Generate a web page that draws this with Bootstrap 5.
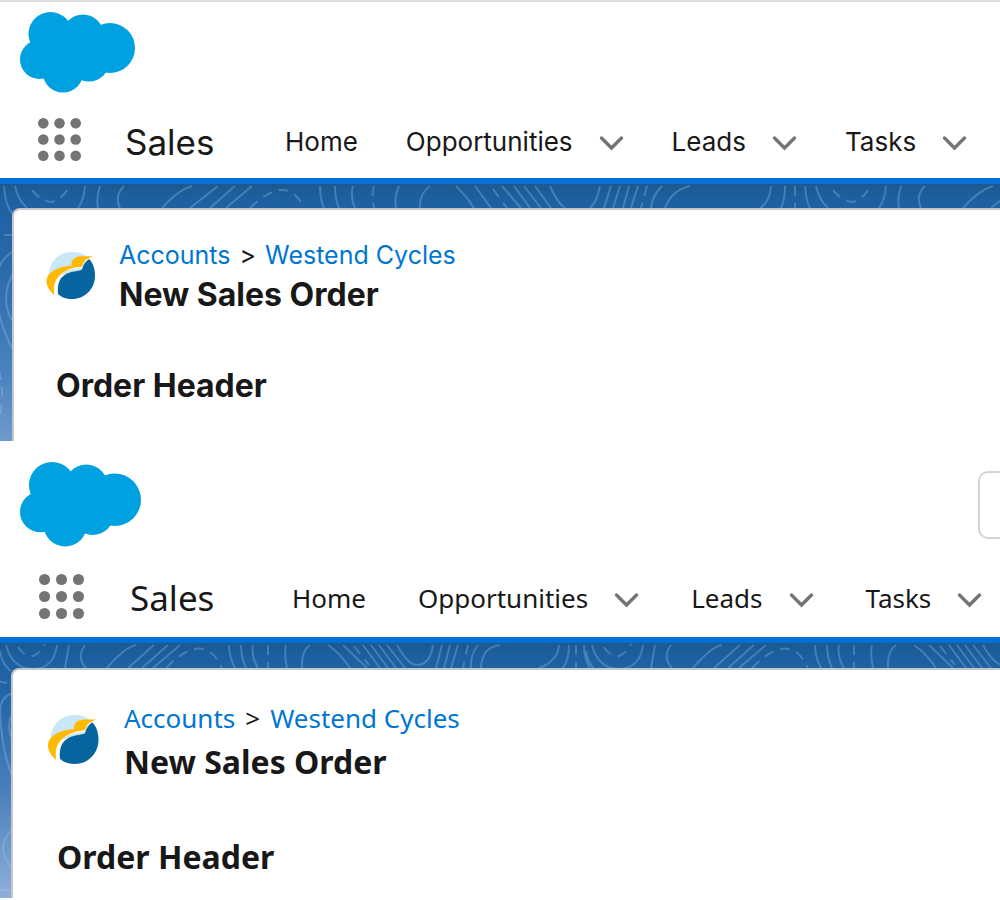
<!DOCTYPE html>
<html lang="en">
<head>
<meta charset="utf-8">
<meta name="viewport" content="width=device-width, initial-scale=1">
<title>New Sales Order</title>
<link href="https://cdn.jsdelivr.net/npm/bootstrap@5.3.0/dist/css/bootstrap.min.css" rel="stylesheet">
<style>
  body { background: #fff; color: #181818; overflow-x: hidden; }
  .pane-mac { font-family: Inter, "Liberation Sans", sans-serif; border-top: 2px solid #dcdcdc; }
  .pane-win { font-family: "Noto Sans", "Open Sans", sans-serif; }
  .brand-row { padding-left: 20px; }
  .pane-mac .brand-row { padding-top: 10px; height: 98px; }
  .pane-win .brand-row { padding-top: 21px; height: 122px; }
  .pane-mac .cloud { width: 115px; height: 81px; }
  .pane-win .cloud { width: 121px; height: 85px; }
  .search-box { width: 22px; height: 68px; margin-top: 9px; border: 2px solid #d4d4d4; border-right: 0; border-radius: 10px 0 0 10px; }
  .app-bar { border-bottom: 6px solid #0070d7; white-space: nowrap; }
  .pane-mac .app-bar { height: 84px; padding: 1px 0 0 38px; }
  .pane-win .app-bar { height: 80px; padding: 0 0 8px 39px; }
  .pane-mac .waffle { width: 43px; height: 43px; }
  .pane-win .waffle { width: 45px; height: 45px; }
  .app-name, .tabs { padding-top: 4px; }
  .app-name { font-size: 35px; line-height: 44px; margin-bottom: 0; }
  .pane-mac .app-name { width: 204px; padding-left: 44px; }
  .pane-win .app-name { width: 208px; padding-left: 46px; }
  .tabs { font-size: 26px; line-height: 36px; }
  .pane-mac .tabs { gap: 48px; }
  .pane-win .tabs { gap: 52px; }
  .tabs a { color: #181818; text-decoration: none; }
  .tab-pair { gap: 26px; }
  .chev { width: 25px; height: 16px; margin-top: 3px; }
  .stage { overflow: hidden; }
  .pane-mac .stage { height: 257px; padding: 24px 0 0 12px; background: linear-gradient(#1b5990, #1c60a1 14px, #2767a9 70px, #4a82bf 190px, #6f9acb); }
  .pane-win .stage { height: 255px; padding: 25px 0 0 11px; background: linear-gradient(#1b5990, #1c60a1 14px, #2767a9 60px, #4a80bb 150px, #8fafd9); }
  .contours { inset: 0; width: 100%; height: 100%; fill: none; stroke: #a5cbed; stroke-opacity: .3; stroke-width: 2; }
  .dashed { stroke-dasharray: 10 7; }
  .sheet { border: solid #c5c6c9; border-width: 2px 0 0 2px; border-radius: 8px 0 0 0; background: #fff; height: 100%; }
  .pane-mac .sheet { padding: 26px 0 0 32px; }
  .pane-win .sheet { padding: 30px 0 0 34px; }
  .pane-mac .bird { width: 49px; height: 48px; margin-top: 16px; }
  .pane-win .bird { width: 52px; height: 50px; margin-top: 15px; }
  .trail { line-height: 36px; gap: 9px; }
  .pane-mac .trail { font-size: 25px; margin-top: 1px; }
  .pane-win .trail { font-size: 26px; margin-bottom: 4px; gap: 10px; }
  .trail a { color: #0076d3; text-decoration: none; }
  .pane-mac .page-head { gap: 24px; }
  .pane-win .page-head { gap: 25px; }
  .sheet h1, .sheet h2 { font-size: 32px; font-weight: 700; margin: 0; line-height: 44px; padding-left: 0; }
  .pane-mac .sheet h2 { margin-top: 47px; padding-left: 10px; }
  .pane-win .sheet h2 { margin-top: 51px; padding-left: 10px; }
</style>
</head>
<body>
<svg width="0" height="0" class="d-none" aria-hidden="true">
  <symbol id="cloud" viewBox="0 0 115 81" preserveAspectRatio="none">
    <g fill="#00a1e0"><circle cx="30.500" cy="22" r="22"/><circle cx="63" cy="23" r="20.500"/><circle cx="90" cy="36" r="25"/><circle cx="19.500" cy="47.500" r="19.500"/><circle cx="43" cy="60" r="20.500"/><circle cx="69" cy="49" r="20.500"/><path d="M10 31L40 15L60 15L90 40L65 60L30 60Z"/></g>
  </symbol>
  <symbol id="waffle" viewBox="0 0 43 43">
    <g fill="#747474"><circle cx="5.300" cy="5.300" r="5.300"/><circle cx="21.500" cy="5.300" r="5.300"/><circle cx="37.700" cy="5.300" r="5.300"/><circle cx="5.300" cy="21.500" r="5.300"/><circle cx="21.500" cy="21.500" r="5.300"/><circle cx="37.700" cy="21.500" r="5.300"/><circle cx="5.300" cy="37.700" r="5.300"/><circle cx="21.500" cy="37.700" r="5.300"/><circle cx="37.700" cy="37.700" r="5.300"/></g>
  </symbol>
  <symbol id="chev" viewBox="0 0 25 16">
    <path d="M2.500 3L12.500 13L22.500 3" fill="none" stroke="#747474" stroke-width="3.400" stroke-linecap="round"/>
  </symbol>
  <symbol id="bird" viewBox="0 0 49 48">
    <path d="M3 22C4 8 14 0 26 0C33 0 38 2 41 5L36 17L10 25Z" fill="#c9e7f7"/>
    <path d="M10.500 44C6 30 12 21 25 17.500C30 16.500 33 16.500 36 16C37 12 38 9 42 5.500L30 5L25 14L4 26L7 42Z" fill="#fff"/>
    <path d="M43 7C47 11 49 17 49 23.500C49 37 39 47 26 47C20 47 15 45 12 42C11 31 14 25 21 21.500C27 19 33 19 36 17.500C37 13 39 10 43 7Z" fill="#06659f"/>
    <path d="M47.500 4.200C41 6.500 38 8 37 12C36 15 35 15 33 15C27 15.500 19 18 14 23C8 29 7 35 8.500 43.500C4 39 0 34 .500 28.500C1 20 11 15 25.500 13.500C25 9 28 5 33 4.500C38 4 43 4.500 47.500 4.200Z" fill="#ffb900"/>
  </symbol>
</svg>

<section class="pane-mac">
  <header>
    <div class="brand-row d-flex"><svg class="cloud" role="img" aria-label="Salesforce"><use href="#cloud"/></svg></div>
    <nav class="app-bar d-flex align-items-center" aria-label="Sales app">
      <button type="button" class="btn p-0 border-0 d-flex" aria-label="App launcher"><svg class="waffle"><use href="#waffle"/></svg></button>
      <p class="app-name flex-shrink-0">Sales</p>
      <div class="tabs d-flex">
        <a href="#">Home</a>
        <div class="tab-pair d-flex align-items-center"><a href="#">Opportunities</a><button type="button" class="btn p-0 border-0 d-flex" aria-label="Opportunities menu"><svg class="chev"><use href="#chev"/></svg></button></div>
        <div class="tab-pair d-flex align-items-center"><a href="#">Leads</a><button type="button" class="btn p-0 border-0 d-flex" aria-label="Leads menu"><svg class="chev"><use href="#chev"/></svg></button></div>
        <div class="tab-pair d-flex align-items-center"><a href="#">Tasks</a><button type="button" class="btn p-0 border-0 d-flex" aria-label="Tasks menu"><svg class="chev"><use href="#chev"/></svg></button></div>
      </div>
    </nav>
  </header>
  <main class="stage position-relative">
    <svg class="contours position-absolute" aria-hidden="true">
      <defs><g id="wave-a">
        <path d="M4 2Q5 22 13 30M15 2Q18 16 27 24M85 2Q84 16 78 24M100 2Q96 14 98 24M124 2Q114 12 120 24M192 2Q178 6 162 24M218 2L190 24M235 2L210 24M252 2L226 24M320 2Q320 16 324 24M335 2Q335 16 339 24M353 2Q350 14 355 24M399 2Q394 14 396 24M430 2Q419 10 420 24M456 2Q468 14 474 24M475 2L491 24M502 2L521 24M514 2L530 24M524 2L541 24M535 2L551 24M550 2Q558 20 565 24M600 2Q597 18 590 24M611 2L604 24M620 2L613 24M629 2L623 24M638 2L631 24M662 2Q652 12 651 24M690 2Q672 6 665 24M771 2Q770 18 760 24M785 2Q785 16 781 24"/>
        <path class="dashed" d="M32 6Q42 18 52 18Q63 15 70 1M250 24Q285 -10 302 20M374 2Q371 12 374 24M493 5L507 24M647 2L641 24M795 2V24"/>
      </g></defs>
      <use href="#wave-a"/><use href="#wave-a" x="801"/><use href="#wave-a" x="1602"/>
      <path d="M12 68Q0 76 -2 88M12 91Q0 116 12 136M-2 126Q4 150 13 166"/>
      <path class="dashed" d="M4 51H12M-1 186Q5 216 -1 236"/>
    </svg>
    <div class="sheet position-relative">
      <div class="page-head d-flex">
        <svg class="bird flex-shrink-0" role="img" aria-label="Account logo"><use href="#bird"/></svg>
        <div>
          <nav class="trail d-flex" aria-label="Breadcrumb"><a href="#">Accounts</a><span>&gt;</span><a href="#">Westend Cycles</a></nav>
          <h1>New Sales Order</h1>
        </div>
      </div>
      <h2>Order Header</h2>
    </div>
  </main>
</section>

<section class="pane-win">
  <header>
    <div class="brand-row d-flex justify-content-between"><svg class="cloud" role="img" aria-label="Salesforce"><use href="#cloud"/></svg><input type="search" class="search-box" aria-label="Search"></div>
    <nav class="app-bar d-flex align-items-center" aria-label="Sales app, second view">
      <button type="button" class="btn p-0 border-0 d-flex" aria-label="App launcher"><svg class="waffle"><use href="#waffle"/></svg></button>
      <p class="app-name flex-shrink-0">Sales</p>
      <div class="tabs d-flex">
        <a href="#">Home</a>
        <div class="tab-pair d-flex align-items-center"><a href="#">Opportunities</a><button type="button" class="btn p-0 border-0 d-flex" aria-label="Opportunities menu"><svg class="chev"><use href="#chev"/></svg></button></div>
        <div class="tab-pair d-flex align-items-center"><a href="#">Leads</a><button type="button" class="btn p-0 border-0 d-flex" aria-label="Leads menu"><svg class="chev"><use href="#chev"/></svg></button></div>
        <div class="tab-pair d-flex align-items-center"><a href="#">Tasks</a><button type="button" class="btn p-0 border-0 d-flex" aria-label="Tasks menu"><svg class="chev"><use href="#chev"/></svg></button></div>
      </div>
    </nav>
  </header>
  <div class="stage position-relative">
    <svg class="contours position-absolute" aria-hidden="true">
      <defs><g id="wave-b">
        <path d="M0 8Q2 22 11 28M6 2Q12 25 32 26Q54 26 57 2M69 2Q67 14 65 25M85 2Q76 14 86 25M136 2Q125 4 107 25M154 2L128 25M168 2L142 25M180 2L153 25M229 2Q229 14 235 25M241 2Q241 14 246 25M253 2Q251 14 258 25M286 2Q284 12 287 25M310 2Q301 8 302 25M328 2Q340 10 350 25M343 2L367 25M363 2L380 25M371 2L388 25M379 2L396 25M387 2L405 25M397 2Q408 22 417 22Q430 22 433 2M442 2L436 25M450 2L444 25M458 2L451 25M478 2Q470 12 471 25M500 2Q482 4 481 25M559 2Q558 18 539 25M569 2Q569 16 563 25"/>
        <path class="dashed" d="M18 4Q24 14 33 13Q41 10 45 1M166 25Q204 -14 222 25M268 2V25M354 3L369 22M468 2L463 25M576 2V25"/>
      </g></defs>
      <use href="#wave-b"/><use href="#wave-b" x="586"/><use href="#wave-b" x="1172"/>
      <path d="M584 2Q584 16 590 25M12 50Q0 55 0 68Q2 110 12 132M12 72Q6 82 12 96M12 187Q-6 205 12 225M0 246L12 248"/>
      <path class="dashed" d="M-2 38L7 40"/>
    </svg>
    <div class="sheet position-relative">
      <div class="page-head d-flex">
        <svg class="bird flex-shrink-0" role="img" aria-label="Account logo"><use href="#bird"/></svg>
        <div>
          <nav class="trail d-flex" aria-label="Breadcrumb, second view"><a href="#">Accounts</a><span>&gt;</span><a href="#">Westend Cycles</a></nav>
          <h1>New Sales Order</h1>
        </div>
      </div>
      <h2>Order Header</h2>
    </div>
  </div>
</section>
<script src="https://cdn.jsdelivr.net/npm/bootstrap@5.3.0/dist/js/bootstrap.bundle.min.js"></script>
</body>
</html>
